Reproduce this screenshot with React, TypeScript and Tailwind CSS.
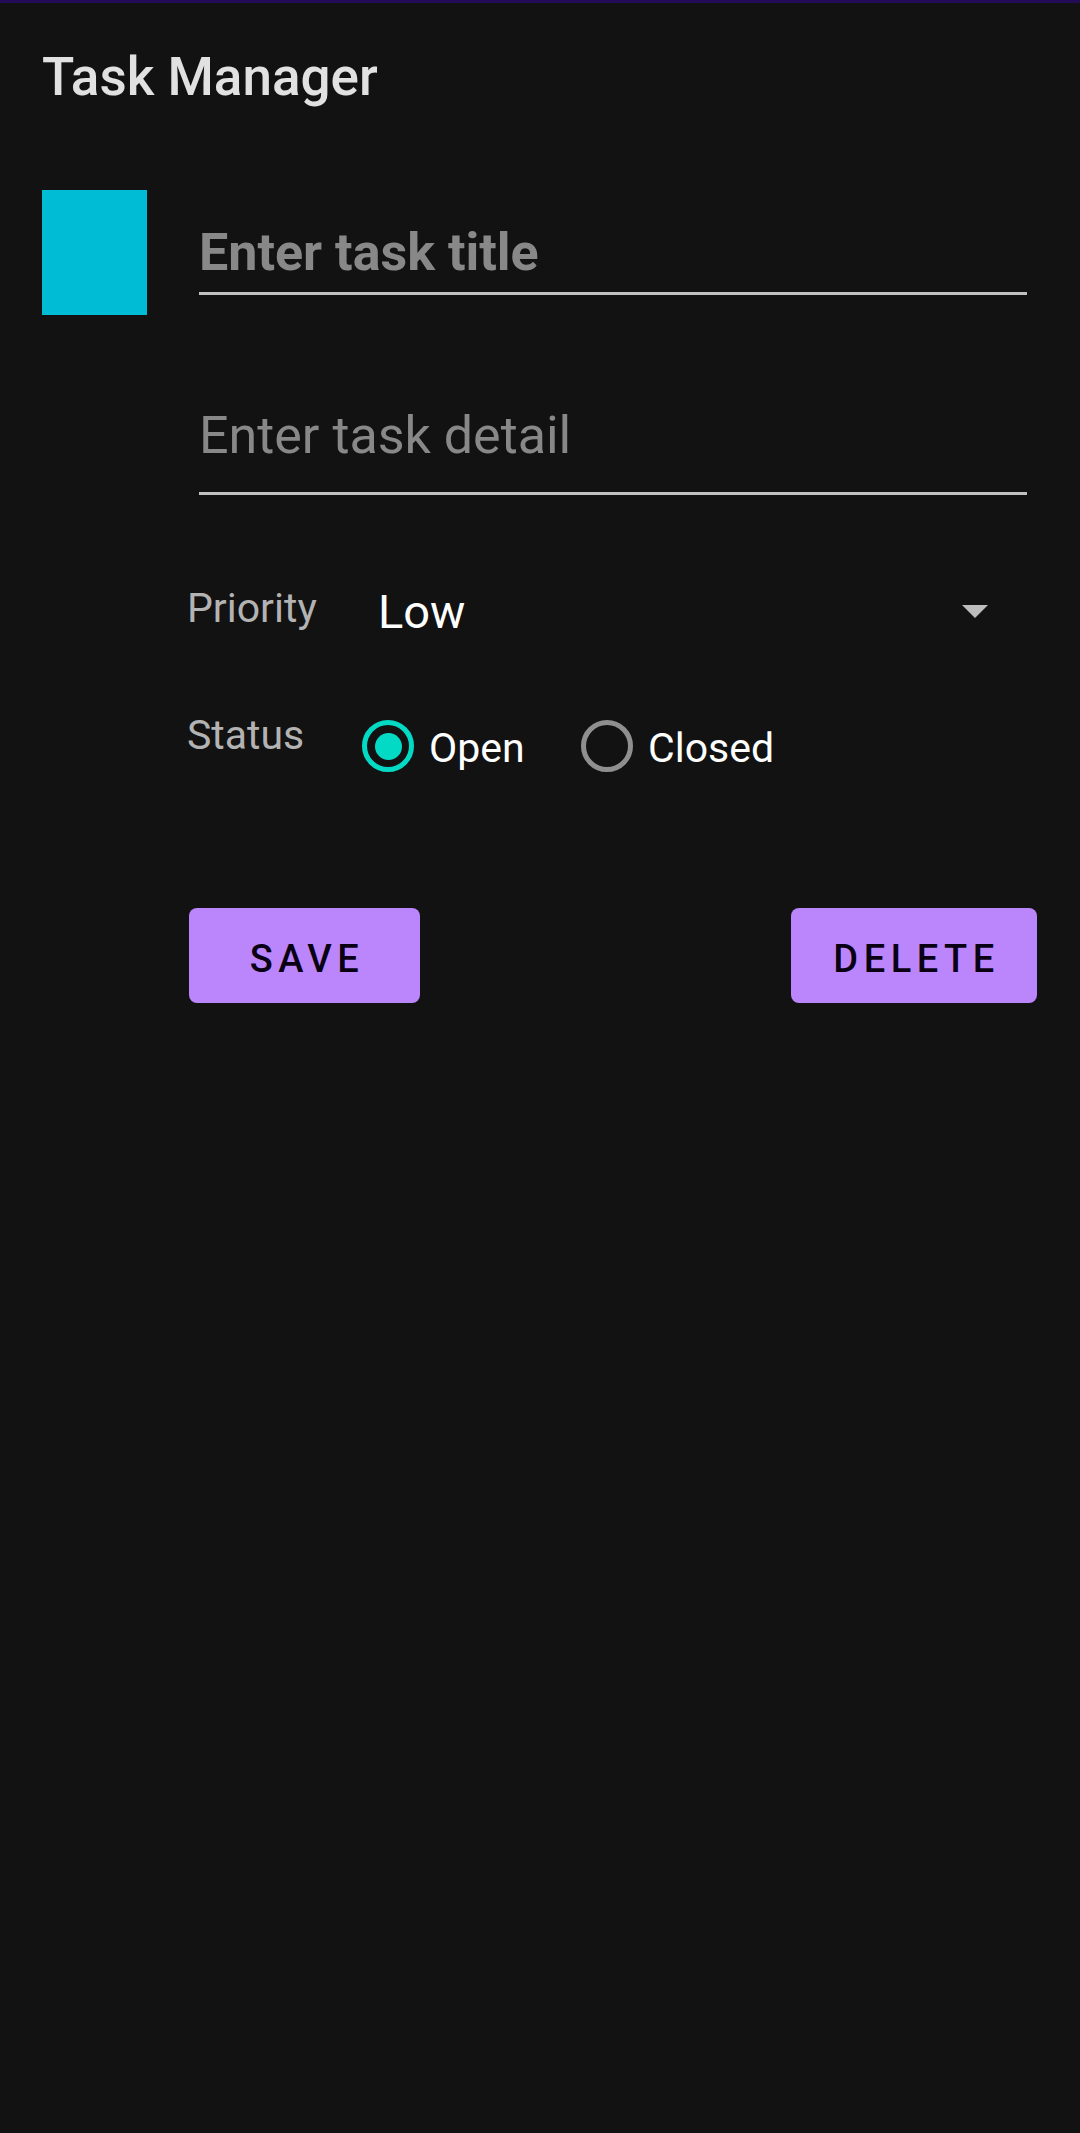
import React, { useState } from 'react';

type Status = 'open' | 'closed';

function Radio({ checked }: { checked: boolean }) {
  return (
    <span
      className={
        checked
          ? 'flex h-[52px] w-[52px] shrink-0 items-center justify-center rounded-full border-[5px] border-[#03dac5]'
          : 'flex h-[52px] w-[52px] shrink-0 items-center justify-center rounded-full border-[5px] border-[#8f8f8f]'
      }
    >
      {checked && <span className="h-[27px] w-[27px] rounded-full bg-[#03dac5]" />}
    </span>
  );
}

export default function App() {
  const [status, setStatus] = useState<Status>('open');

  return (
    <div className="min-h-[2133px] w-full bg-[#121212] font-['Roboto',sans-serif]">
      <div className="h-[3px] bg-[#230b57]" />

      <div className="pl-[42px] pr-[43px]">
        <h1 className="mt-[48px] text-[53px] font-medium leading-none text-[#e1e1e1]">Task Manager</h1>

        {/* Title row */}
        <div className="mt-[86px] flex items-start">
          <div className="h-[125px] w-[105px] shrink-0 bg-[#00bcd4]" />
          <div className="ml-[52px] w-[828px] pt-[37px]">
            <div className="text-[52px] font-bold leading-none text-[#888888]">Enter task title</div>
            <div className="mt-[13px] h-[3px] bg-[#c2c2c2]" />
          </div>
        </div>

        {/* Detail */}
        <div className="ml-[157px] mt-[95px] w-[828px]">
          <div className="text-[52px] leading-none text-[#888888]">Enter task detail</div>
          <div className="mt-[30px] h-[3px] bg-[#c2c2c2]" />
        </div>

        {/* Priority */}
        <div className="ml-[145px] mt-[93px] flex items-start">
          <div className="w-[191px] shrink-0 text-[41px] leading-none text-[#b3b3b3]">Priority</div>
          <div className="flex w-[610px] items-center justify-between">
            <span className="text-[47px] leading-none text-white">Low</span>
            <svg width="26" height="13" viewBox="0 0 26 13">
              <path d="M0 0 L26 0 L13 13 Z" fill="#bdbdbd" />
            </svg>
          </div>
        </div>

        {/* Status */}
        <div className="ml-[145px] mt-[80px] flex items-start">
          <div className="w-[175px] shrink-0 text-[41px] leading-none text-[#b3b3b3]">Status</div>
          <div className="mt-[5px] flex">
            <button className="flex w-[219px] items-start" onClick={() => setStatus('open')}>
              <Radio checked={status === 'open'} />
              <span className="ml-[15px] mt-[8px] text-[41px] leading-none text-white">Open</span>
            </button>
            <button className="flex items-start" onClick={() => setStatus('closed')}>
              <Radio checked={status === 'closed'} />
              <span className="ml-[15px] mt-[8px] text-[41px] leading-none text-white">Closed</span>
            </button>
          </div>
        </div>

        {/* Buttons */}
        <div className="ml-[147px] mt-[136px] flex items-center justify-between">
          <button className="flex h-[95px] w-[231px] items-center justify-center rounded-[8px] bg-[#bb86fc] pl-[5px] pt-[6px] text-[38px] font-medium leading-none tracking-[5.5px] text-[#0a0014]">
            SAVE
          </button>
          <button className="flex h-[95px] w-[246px] items-center justify-center rounded-[8px] bg-[#bb86fc] pl-[5px] pt-[6px] text-[38px] font-medium leading-none tracking-[5.5px] text-[#0a0014]">
            DELETE
          </button>
        </div>
      </div>
    </div>
  );
}
